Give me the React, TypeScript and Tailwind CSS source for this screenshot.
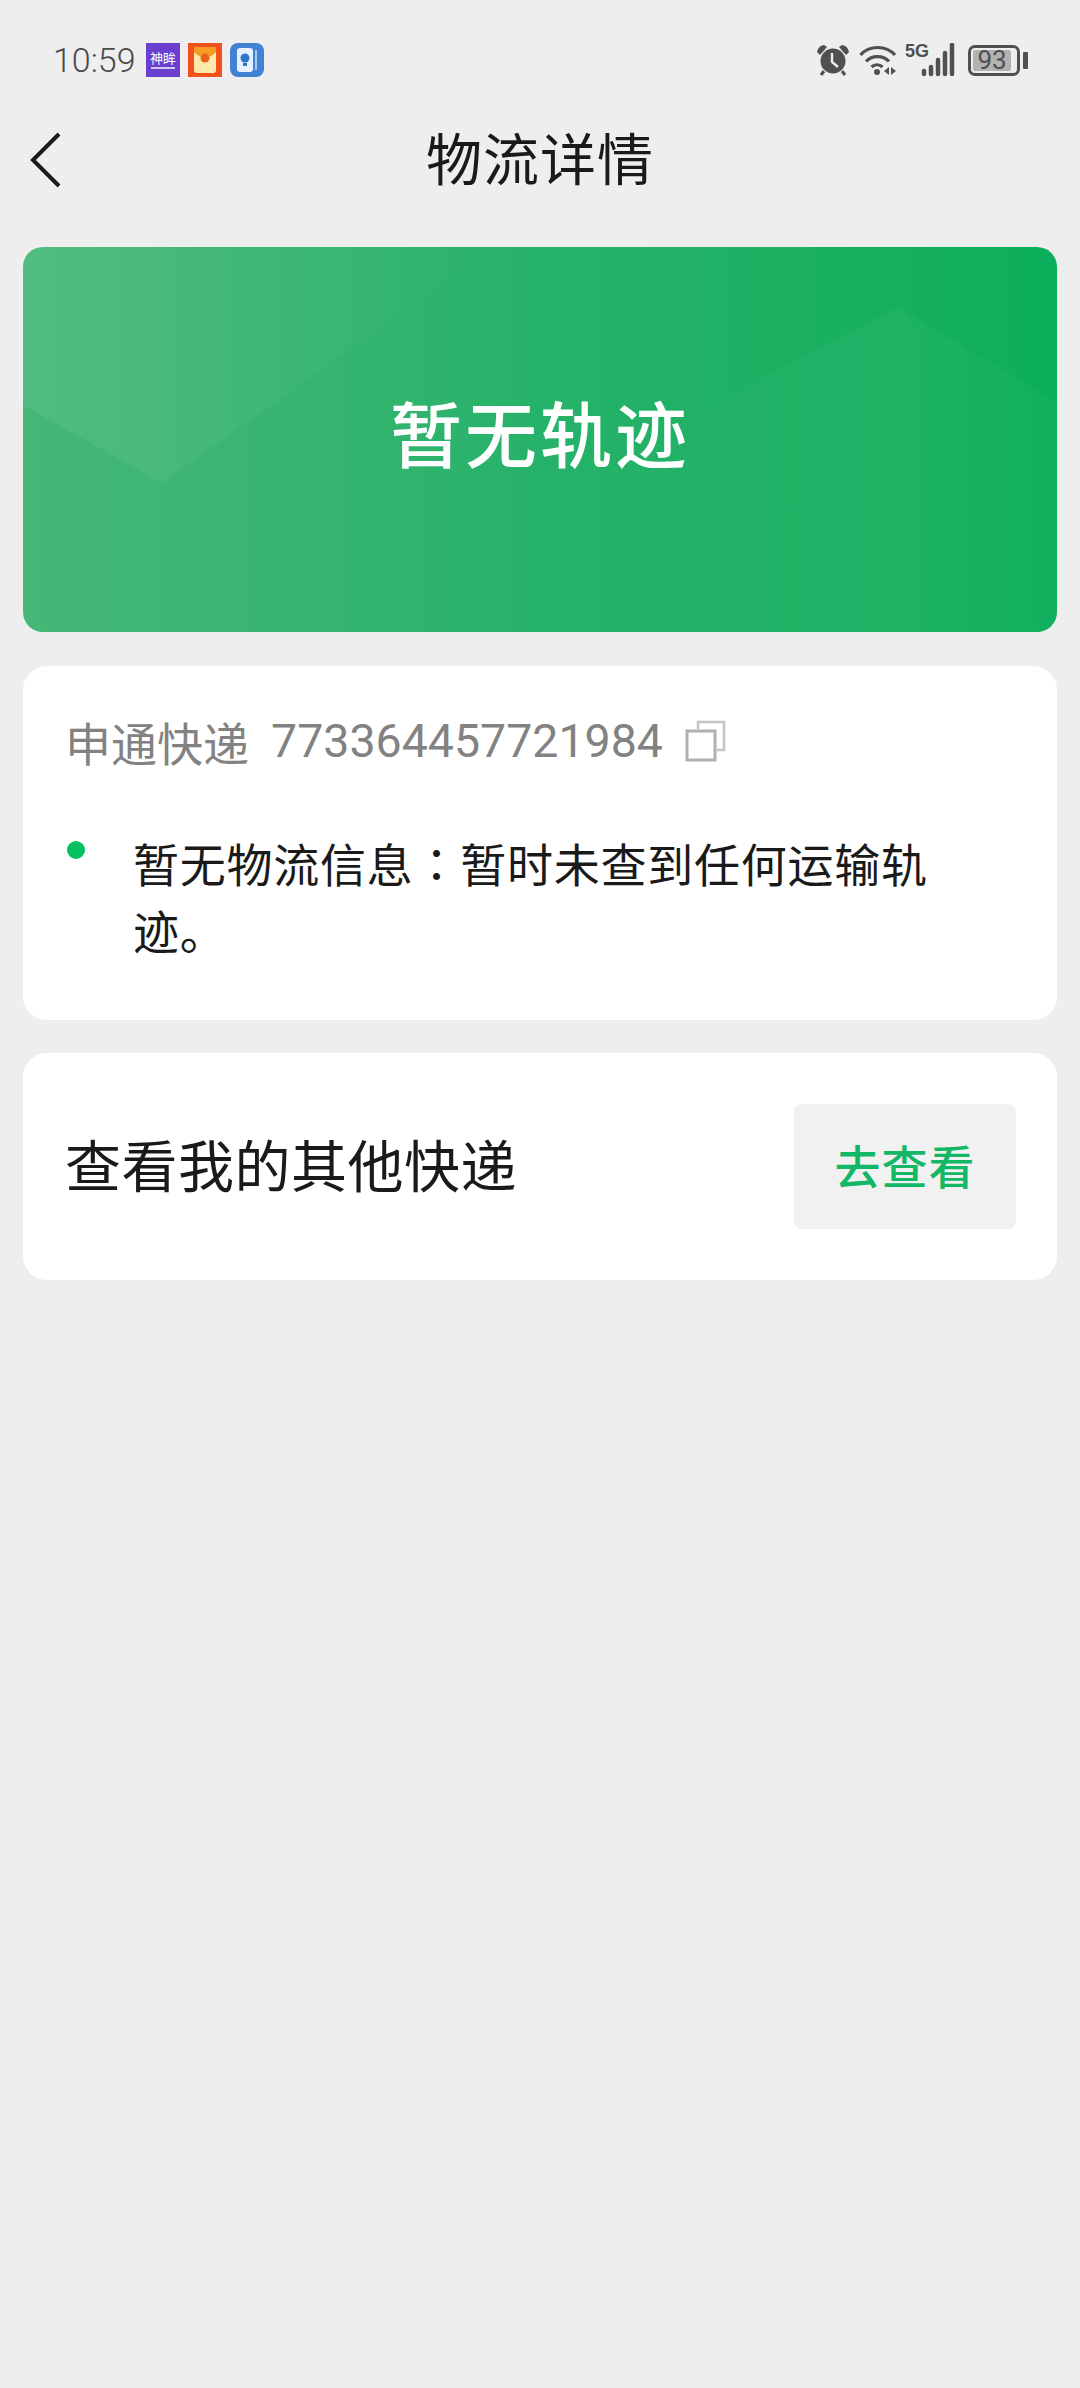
import React from "react";

const cjk = "font-['Noto_Sans_CJK_SC','Noto_Sans',sans-serif]";

function StatusIcons() {
  return (
    <div className="flex items-center h-[34px]">
      <svg width="32" height="32" viewBox="0 0 32 32" className="mr-[10px]">
        <circle cx="16" cy="17" r="12.500" fill="#505050" />
        <path d="M0 8 Q1 2 7 1 L10 3 L3 11Z M32 8 Q31 2 25 1 L22 3 L29 11Z" fill="#505050" />
        <path d="M7 27l-3 4M25 27l3 4" stroke="#505050" strokeWidth="3" />
        <path d="M15 9v9l6 5" fill="none" stroke="#eeeeee" strokeWidth="2.400" />
      </svg>
      <svg width="38" height="32" viewBox="0 0 38 32" className="mr-[8px]">
        <path d="M1.500 11C10 1 27 1 36 11M7 17.500C13 11 24 11 30 17.500M12.500 23c3-3 8-3 11 0" fill="none" stroke="#505050" strokeWidth="3.200" />
        <circle cx="18" cy="28" r="3" fill="#505050" />
        <path d="M30 23v8l-5-4zM32 23v8l5-4z" fill="#505050" />
      </svg>
      <div className="relative w-[50px] h-[34px] mr-[13px]">
        <span className="absolute left-0 top-[-1px] text-[18px] leading-[18px] font-bold text-[#505050] font-['Liberation_Sans_Narrow','Liberation_Sans',sans-serif]">5G</span>
        <svg width="50" height="34" viewBox="0 0 50 34" className="absolute left-0 top-0">
          <path d="M19 27v3M26 23v7M33 16v14M40 9v21M47 1v29" transform="translate(0 1)" stroke="#505050" strokeWidth="4.500" strokeLinecap="round" />
        </svg>
      </div>
      <div className="w-[52px] h-[31px] border-[3px] border-[#505050] rounded-[7px] p-[2px] flex">
        <div className="w-[38px] bg-[#b2b2b2] rounded-[2px] flex items-center justify-center text-[26px] leading-none text-[#505050] font-['Roboto',sans-serif]">
          93
        </div>
      </div>
      <div className="w-[5px] h-[17px] ml-[3px] bg-[#505050] rounded-[1px]" />
    </div>
  );
}

export default function App() {
  return (
    <div className={`w-[1080px] h-[2388px] bg-[#eeeeee] overflow-hidden flex flex-col ${cjk}`}>
      <div className="h-[76px] pt-[43px] pl-[53px] pr-[52px] flex items-start justify-between">
        <div className="flex items-center h-[34px]">
          <span className="text-[34px] leading-none font-light text-[#4a4a4a] font-['Roboto',sans-serif] w-[93px]">10:59</span>
          <div className="w-[34px] h-[34px] bg-[#6a3fd0] flex flex-col items-center justify-center mr-[8px]">
            <span className="text-[13px] leading-[14px] text-white">神眸</span>
            <div className="w-[24px] h-[2px] bg-white/70 mt-[2px]" />
          </div>
          <div className="w-[34px] h-[34px] bg-[#f4511e] flex items-center justify-center mr-[8px]">
            <svg width="22" height="26" viewBox="0 0 22 26">
              <rect width="22" height="26" rx="3" fill="#fde9a9" />
              <path d="M0 5 Q11 16 22 5 V2 Q22 0 19 0 H3 Q0 0 0 2Z" fill="#f59a23" />
              <circle cx="11" cy="11" r="4.500" fill="#e8631c" />
            </svg>
          </div>
          <div className="w-[34px] h-[34px] rounded-[8px] bg-[#3f82d6] flex items-center justify-center">
            <svg width="22" height="24" viewBox="0 0 22 24">
              <rect x="1" y="0" width="16" height="24" rx="3" fill="#e8f1fb" />
              <rect x="19" y="2" width="2" height="20" fill="#a5c8ee" />
              <circle cx="9" cy="10" r="4.500" fill="#2f74c8" />
              <rect x="7" y="15" width="4" height="3" fill="#2f74c8" />
            </svg>
          </div>
        </div>
        <StatusIcons />
      </div>

      <div className="relative h-[123px] flex items-center justify-center">
        <svg width="34" height="58" viewBox="0 0 34 58" className="absolute left-[29px] top-[55px]">
          <path d="M30 3 L4 29 L30 55" fill="none" stroke="#1c1c1c" strokeWidth="4" />
        </svg>
        <span className="text-[56px] leading-none text-[#1a1a1a] tracking-[1px] mt-[37px]">物流详情</span>
      </div>

      <div className="relative mx-[23px] mt-[48px] h-[385px] rounded-[20px] overflow-hidden bg-gradient-to-r from-[#45b777] via-[#26b26a] to-[#0aae5a] flex items-center justify-center">
        <svg width="1034" height="385" viewBox="0 0 1034 385" className="absolute left-0 top-0">
          <defs>
            <linearGradient id="lt" x1="0" y1="0" x2="1" y2="0">
              <stop offset="0" stopColor="#ffffff" stopOpacity="0.07" />
              <stop offset="1" stopColor="#ffffff" stopOpacity="0" />
            </linearGradient>
            <linearGradient id="rt" x1="0" y1="0" x2="1" y2="0">
              <stop offset="0.3" stopColor="#ffffff" stopOpacity="0" />
              <stop offset="0.75" stopColor="#ffffff" stopOpacity="0.035" />
              <stop offset="1" stopColor="#ffffff" stopOpacity="0.025" />
            </linearGradient>
          </defs>
          <path d="M0 0H470L139 236L0 158Z" fill="url(#lt)" />
          <path d="M400 310L874 60L1034 155V385H400Z" fill="url(#rt)" />
        </svg>
        <span className="relative text-[72px] leading-none text-white font-medium tracking-[3px] mt-[-18px]">暂无轨迹</span>
      </div>

      <div className="mx-[23px] mt-[34px] h-[354px] rounded-[24px] bg-white pl-[44px] pt-[50px] flex flex-col">
        <div className="flex items-center h-[50px] text-[46px] leading-none text-[#828282]">
          <span className="ml-[-2px]">申通快递</span>
          <span className="ml-[22px] font-['Roboto',sans-serif] text-[46.500px]">773364457721984</span>
          <svg width="42" height="42" viewBox="0 0 42 42" className="ml-[22px]">
            <path d="M13 9V2H39V30H32" fill="none" stroke="#c4c4c4" strokeWidth="2.500" />
            <rect x="2" y="11" width="28" height="29" fill="none" stroke="#b0b0b0" strokeWidth="3" />
          </svg>
        </div>
        <div className="flex mt-[66px]">
          <div className="w-[18px] h-[18px] rounded-full bg-[#07c160] mt-[9px] shrink-0" />
          <div className="ml-[48px] text-[46px] leading-[67px] text-[#1a1a1a] mt-[-3px] tracking-[0.75px] whitespace-nowrap">
            <div>
              <span>暂无物流信息</span>
              <span className="font-['Noto_Sans_CJK_TC',sans-serif]">：</span>
              <span>暂时未查到任何运输轨</span>
            </div>
            <div>迹。</div>
          </div>
        </div>
      </div>

      <div className="mx-[23px] mt-[33px] h-[227px] rounded-[24px] bg-white pl-[42px] pr-[41px] flex items-center justify-between">
        <span className="text-[56px] leading-none text-[#1a1a1a] tracking-[0.5px] mt-[-8px]">查看我的其他快递</span>
        <div className="w-[222px] h-[125px] rounded-[8px] bg-[#f1f1f1] flex items-center justify-center text-[46px] leading-none font-medium text-[#12b866] tracking-[1px]">
          <span className="mt-[-6px]">去查看</span>
        </div>
      </div>
    </div>
  );
}
